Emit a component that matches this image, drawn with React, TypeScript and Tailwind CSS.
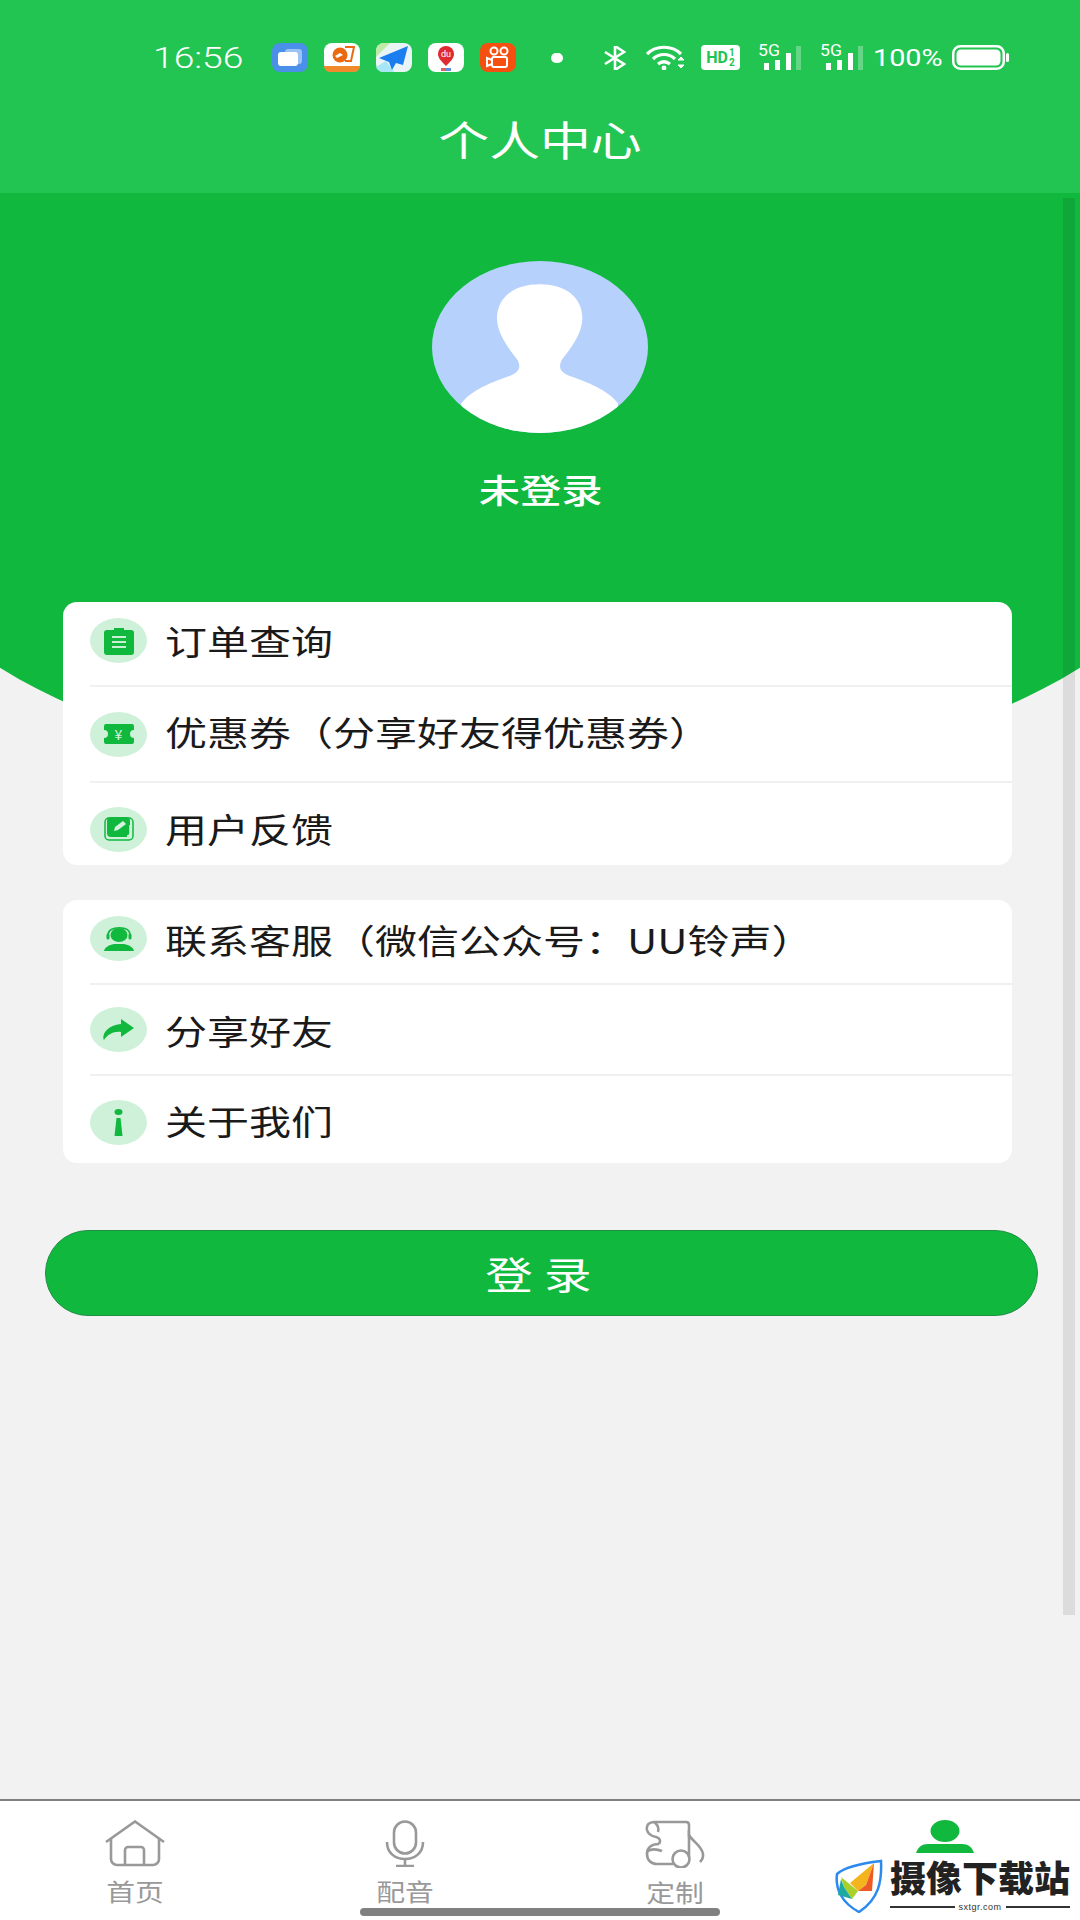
import React from "react";

const GREEN = "#10b83e";

function ClipboardIcon() {
  return (
    <svg width="30" height="28" viewBox="0 0 30 28">
      <path d="M3 3h7V1h10v2h7a3 3 0 0 1 3 3v19a3 3 0 0 1-3 3H3a3 3 0 0 1-3-3V6a3 3 0 0 1 3-3z" fill={GREEN} />
      <path d="M8 10h14M8 15h14M8 20h14" stroke="#c9efd5" strokeWidth="2" />
    </svg>
  );
}

function TicketIcon() {
  return (
    <div className="relative w-[30px] h-[20px]">
      <svg width="30" height="20" viewBox="0 0 30 20">
        <path d="M2 0h26a2 2 0 0 1 2 2v4a4 4 0 0 0 0 8v4a2 2 0 0 1-2 2H2a2 2 0 0 1-2-2v-4a4 4 0 0 0 0-8V2a2 2 0 0 1 2-2z" fill={GREEN} />
      </svg>
      <span className="absolute inset-0 flex items-center justify-center text-[14px] leading-none text-[#d6f3df]">¥</span>
    </div>
  );
}

function EditIcon() {
  return (
    <svg width="30" height="24" viewBox="0 0 30 24">
      <rect x="1" y="1" width="28" height="22" rx="4" fill="none" stroke={GREEN} strokeWidth="1.5" />
      <rect x="3" y="0" width="23" height="20" rx="4" fill={GREEN} />
      <path d="M10 14l1-4 8-6 3 3-8 6z" fill="#d6f3df" />
      <path d="M26 8v8a3 3 0 0 1-3 3" fill="none" stroke="#d6f3df" strokeWidth="1.5" />
    </svg>
  );
}

function AgentIcon() {
  return (
    <svg width="30" height="24" viewBox="0 0 30 24">
      <ellipse cx="15" cy="8" rx="8.5" ry="7" fill={GREEN} />
      <path d="M4 10V8C4 3 9 0.8 15 0.8S26 3 26 8v2" fill="none" stroke={GREEN} strokeWidth="1.6" />
      <rect x="2.5" y="6.5" width="3" height="6" rx="1.5" fill={GREEN} />
      <rect x="24.5" y="6.5" width="3" height="6" rx="1.5" fill={GREEN} />
      <path d="M0 24c1-4 5-6 10-7h10c5 1 9 3 10 7z" fill={GREEN} />
    </svg>
  );
}

function ShareIcon() {
  return (
    <svg width="31" height="21" viewBox="0 0 31 21">
      <path d="M18 0l13 9-13 9v-5C11 12 5 15 1 21c-1-1-1-3 0-6 2-5 8-9 17-10z" fill={GREEN} />
    </svg>
  );
}

function InfoIcon() {
  return (
    <svg width="9" height="27" viewBox="0 0 9 27">
      <ellipse cx="4.5" cy="3" rx="4" ry="3" fill={GREEN} />
      <path d="M2.5 9h4l2 18H0.5z" fill={GREEN} />
    </svg>
  );
}

const groups = [
  [
    { label: "订单查询", icon: <ClipboardIcon />, row: "h-[85px] pb-[6px] border-b-2", text: "" },
    { label: "优惠券（分享好友得优惠券）", icon: <TicketIcon />, row: "h-[96px] border-b-2", text: "-mt-[4px]" },
    { label: "用户反馈", icon: <EditIcon />, row: "h-[82px] pt-[10px]", text: "" },
  ],
  [
    { label: "联系客服（微信公众号：UU铃声）", icon: <AgentIcon />, row: "h-[85px] pb-[6px] border-b-2", text: "mt-[2px]" },
    { label: "分享好友", icon: <ShareIcon />, row: "h-[91px] border-b-2", text: "mt-[2px]" },
    { label: "关于我们", icon: <InfoIcon />, row: "h-[87px] pt-[6px]", text: "-mt-[4px]" },
  ],
];

function AppIcons() {
  return (
    <div className="flex gap-[16px]">
      <svg width="36" height="29" viewBox="0 0 36 29">
        <rect width="36" height="29" rx="8" fill="#4a8fe8" />
        <rect x="13" y="6" width="17" height="15" rx="3" fill="#9cc3f5" />
        <rect x="6" y="9" width="20" height="14" rx="3" fill="#fff" />
      </svg>
      <svg width="36" height="29" viewBox="0 0 36 29">
        <rect width="36" height="29" rx="8" fill="#fff" />
        <path d="M0 23h36a6 6 0 0 1-6 6H6a6 6 0 0 1-6-6z" fill="#f08a2c" />
        <circle cx="16" cy="12" r="7.5" fill="#ea6a14" />
        <path d="M21 4h9l-3 14h-6" fill="none" stroke="#ea6a14" strokeWidth="2" />
        <path d="M11 13l5-3 3 2-6 3z" fill="#fff" />
      </svg>
      <svg width="36" height="29" viewBox="0 0 36 29">
        <rect width="36" height="29" rx="8" fill="#e8f4f6" />
        <path d="M0 8a8 8 0 0 1 8-8h6L0 14z" fill="#bdeaa4" />
        <path d="M0 24l10-6 8 11H8a8 8 0 0 1-8-5z" fill="#a6e6f6" />
        <path d="M32 3L3 15l10 4 3 8 4-7 7 2z" fill="#1a7ef0" />
      </svg>
      <svg width="36" height="29" viewBox="0 0 36 29">
        <rect width="36" height="29" rx="8" fill="#fff" />
        <path d="M18 23c-5-5-8-8-8-12a8 8 0 0 1 16 0c0 4-3 7-8 12z" fill="#df2a32" />
        <text x="18" y="14" fontSize="9" fill="#fff" textAnchor="middle" fontFamily="Roboto, sans-serif">du</text>
        <rect x="13" y="25" width="5" height="3" fill="#df6060" />
        <rect x="18" y="25" width="5" height="3" fill="#5a8fe0" />
      </svg>
      <svg width="36" height="29" viewBox="0 0 36 29">
        <rect width="36" height="29" rx="8" fill="#f5500f" />
        <circle cx="14" cy="8" r="3.5" fill="none" stroke="#fff" strokeWidth="2" />
        <circle cx="24" cy="8" r="3.5" fill="none" stroke="#fff" strokeWidth="2" />
        <rect x="12" y="14" width="15" height="10" rx="2" fill="none" stroke="#fff" strokeWidth="2" />
        <path d="M12 17l-5-2v8l5-2" fill="none" stroke="#fff" strokeWidth="2" />
      </svg>
    </div>
  );
}

function Signal() {
  return (
    <div className="relative w-[43px] h-[25px]">
      <span className="absolute left-0 -top-[3px] text-[16px] leading-[18px] text-white font-['Roboto',sans-serif] origin-left scale-x-[1.1]">5G</span>
      <svg className="absolute left-0 top-0" width="43" height="25" viewBox="0 0 43 25">
        <rect x="6" y="18" width="5" height="7" fill="#fff" />
        <rect x="17" y="15" width="5" height="10" fill="#fff" />
        <rect x="28" y="8" width="5" height="17" fill="#fff" />
        <rect x="38" y="1" width="5" height="24" fill="#fff" fillOpacity="0.3" />
      </svg>
    </div>
  );
}

function StatusBar() {
  return (
    <div className="mt-[43px] h-[29px] pl-[153px] flex items-center">
      <div className="w-[119px] text-[30px] leading-none font-light text-white font-['Roboto',sans-serif]">
        <span className="inline-block origin-left scale-x-[1.24]">16:56</span>
      </div>
      <AppIcons />
      <div className="ml-[35px] w-[12px] h-[10px] rounded-full bg-white" />
      <svg className="ml-[40px]" width="23" height="24" viewBox="0 0 23 24">
        <path d="M2 6l19 12-9 6V0l9 6L2 18" fill="none" stroke="#fff" strokeWidth="2.6" />
      </svg>
      <svg className="ml-[20px]" width="40" height="25" viewBox="0 0 40 25">
        <path d="M1 9C10 0 26 0 35 9M7 14c6-6 16-6 22 0M12 19c4-3 8-3 12 0" fill="none" stroke="#fff" strokeWidth="3.2" />
        <circle cx="18" cy="23" r="2.4" fill="#fff" />
        <path d="M32 15l3-3 3 3zM32 20l3 3 3-3z" fill="#fff" stroke="#fff" />
      </svg>
      <div className="ml-[15px] w-[39px] h-[25px] bg-white rounded-[4px] flex items-center justify-center text-[#22c552] font-['Roboto',sans-serif] font-bold overflow-hidden">
        <span className="text-[16px] leading-none">HD</span>
        <span className="flex flex-col text-[10px] leading-[10px] ml-[1px]">
          <span>1</span>
          <span>2</span>
        </span>
      </div>
      <div className="ml-[18px]">
        <Signal />
      </div>
      <div className="ml-[19px]">
        <Signal />
      </div>
      <div className="ml-[10px] w-[69px] text-[24px] leading-none text-white font-['Roboto',sans-serif]">
        <span className="inline-block origin-left scale-x-[1.2]">100%</span>
      </div>
      <svg className="ml-[10px]" width="57" height="25" viewBox="0 0 57 25">
        <rect x="1.25" y="1.25" width="50.5" height="22.5" rx="7" fill="none" stroke="#fff" strokeWidth="2.5" />
        <rect x="4.5" y="4.5" width="44" height="16" rx="4.5" fill="#fff" />
        <rect x="54" y="8" width="3" height="9" rx="1.5" fill="#fff" />
      </svg>
    </div>
  );
}

function TabIcon({ name }: { name: string }) {
  if (name === "home") {
    return (
      <svg width="60" height="47" viewBox="0 0 60 47" fill="none" stroke="#999" strokeWidth="2.6">
        <path d="M1 22L30 1.5 59 22" />
        <path d="M6 18v21a6 6 0 0 0 6 6h36a6 6 0 0 0 6-6V18" />
        <path d="M20 45V30a3 3 0 0 1 3-3h13a3 3 0 0 1 3 3v15" />
      </svg>
    );
  }
  if (name === "mic") {
    return (
      <svg width="40" height="47" viewBox="0 0 40 47" fill="none" stroke="#999" strokeWidth="2.6">
        <rect x="9" y="1.5" width="22" height="32" rx="11" />
        <path d="M2 22c0 11 8 17 18 17s18-6 18-17" />
        <path d="M20 39v7M11 46h18" />
      </svg>
    );
  }
  if (name === "score") {
    return (
      <svg width="60" height="48" viewBox="0 0 60 48" fill="none" stroke="#999" strokeWidth="2.6">
        <path d="M9 2h32c2 0 3 1 3 3v12" />
        <path d="M9 2C4 2 1 5 2 10c1 4 4 6 9 7 4 1 5 4 3 7" />
        <path d="M9 2c4 3 5 7 4 10" />
        <path d="M14 24C6 24 2 28 2 34c0 6 4 10 10 10h16" />
        <path d="M2 31c4-2 10-2 15 0" />
        <circle cx="36" cy="39" r="8.5" />
        <path d="M44 37V15c4 7 13 11 14 19 .4 3-1 6-3 8" />
      </svg>
    );
  }
  return (
    <svg width="58" height="47" viewBox="0 0 58 47" fill={GREEN}>
      <ellipse cx="29" cy="11" rx="14.5" ry="11" />
      <path d="M0 33c2-6 6-9 12-9h34c6 0 10 3 12 9v14H0z" />
    </svg>
  );
}

const tabs = [
  { name: "home", label: "首页" },
  { name: "mic", label: "配音" },
  { name: "score", label: "定制" },
  { name: "me", label: "" },
];

function Watermark() {
  return (
    <div className="absolute left-[832px] top-[1853px] w-[248px] h-[67px] bg-white flex">
      <svg className="ml-[2px] mt-[4px]" width="50" height="56" viewBox="0 0 50 56">
        <path d="M3 17C12 9 30 6 47 4c1 20-2 38-22 51C8 46 1 32 3 17z" fill="#fff" stroke="#2b8af0" strokeWidth="2.5" />
        <path d="M7 20l17 14-6 8-8-12z" fill="#a9d02a" />
        <path d="M7 22L4 38l14 4-8-12z" fill="#1fa8a0" />
        <path d="M40 6L16 26l8 8 8-6z" fill="#f4b41e" />
        <path d="M40 6l-8 22-8 6 14 0z" fill="#ee5a24" />
      </svg>
      <div className="ml-[6px] flex flex-col">
        <span className="mt-[7px] text-[36px] leading-[40px] font-black text-[#222] whitespace-nowrap font-['Liberation_Serif','Noto_Sans_CJK_SC',serif]">摄像下载站</span>
        <div className="mt-[1px] flex items-center gap-[4px] w-[180px]">
          <div className="flex-1 h-[2px] bg-[#333]" />
          <span className="text-[9px] leading-[12px] text-[#333] font-['Liberation_Sans',sans-serif] tracking-[0.5px]">sxtgr.com</span>
          <div className="flex-1 h-[2px] bg-[#333]" />
        </div>
      </div>
    </div>
  );
}

export default function App() {
  return (
    <div className="relative w-[1080px] h-[1920px] overflow-hidden bg-[#f2f2f2] flex flex-col font-['Noto_Sans_CJK_SC',sans-serif]">
      <div className="relative z-10 h-[193px] shrink-0 bg-[#22c552]">
        <StatusBar />
        <div className="mt-[40px] h-[52px] flex items-center justify-center text-[41px] leading-none text-white">
          <span className="scale-x-[1.24]">个人中心</span>
        </div>
      </div>

      <div className="w-[1300px] h-[597px] shrink-0 -ml-[110px] bg-[#10b83e] rounded-b-[650px_276px] flex flex-col items-center pt-[68px]">
        <div className="w-[216px] h-[172px] rounded-[50%] overflow-hidden bg-[#b6d2fc]">
          <svg width="216" height="172" viewBox="97 63 648 516">
            <path
              d="M420 133C345 133 292 170 292 235C292 285 335 335 355 362C365 385 355 398 330 408C280 425 215 450 185 490L185 600L655 600L655 490C625 450 560 425 510 408C485 398 475 385 485 362C505 335 548 285 548 235C548 170 495 133 420 133Z"
              fill="#fff"
            />
          </svg>
        </div>
        <div className="mt-[32px] text-[33px] leading-[48px] text-white font-medium">
          <span className="inline-block scale-x-[1.25]">未登录</span>
        </div>
      </div>

      <div className="relative -mt-[188px] ml-[63px] w-[949px] flex flex-col gap-[35px]">
        {groups.map((group, i) => (
          <div key={i} className="bg-white rounded-[14px] overflow-hidden">
            {group.map((item) => (
              <div key={item.label} className={`ml-[27px] flex items-center border-[#f0f0f0] ${item.row}`}>
                <div className="w-[57px] h-[45px] shrink-0 rounded-[50%] bg-[#cff0d9] flex items-center justify-center">
                  {item.icon}
                </div>
                <span className={`ml-[18px] inline-block origin-left scale-x-[1.235] text-[34px] leading-none text-[#1a1a1a] whitespace-nowrap ${item.text}`}>
                  {item.label}
                </span>
              </div>
            ))}
          </div>
        ))}
      </div>

      <button className="mt-[67px] ml-[45px] w-[993px] h-[86px] shrink-0 rounded-full bg-[#10b83e] border border-[#1f8f45] pl-[5px] text-white text-[38px] leading-none tracking-[9px]">
        <span className="inline-block scale-x-[1.25]">登录</span>
      </button>

      <div className="flex-1" />

      <div className="h-[121px] shrink-0 bg-white border-t-2 border-[#808080] grid grid-cols-4">
        {tabs.map((tab) => (
          <div key={tab.name} className="flex flex-col items-center pt-[19px]">
            <TabIcon name={tab.name} />
            <span className="mt-[10px] text-[24px] leading-[28px] text-[#999999] inline-block scale-x-[1.2]">{tab.label}</span>
          </div>
        ))}
      </div>

      <Watermark />
      <div className="absolute left-[360px] top-[1908px] w-[360px] h-[8px] rounded-full bg-[#808080]" />
      <div className="absolute z-20 left-[1063px] top-[198px] w-[12px] h-[1417px] bg-black/[0.09]" />
    </div>
  );
}
